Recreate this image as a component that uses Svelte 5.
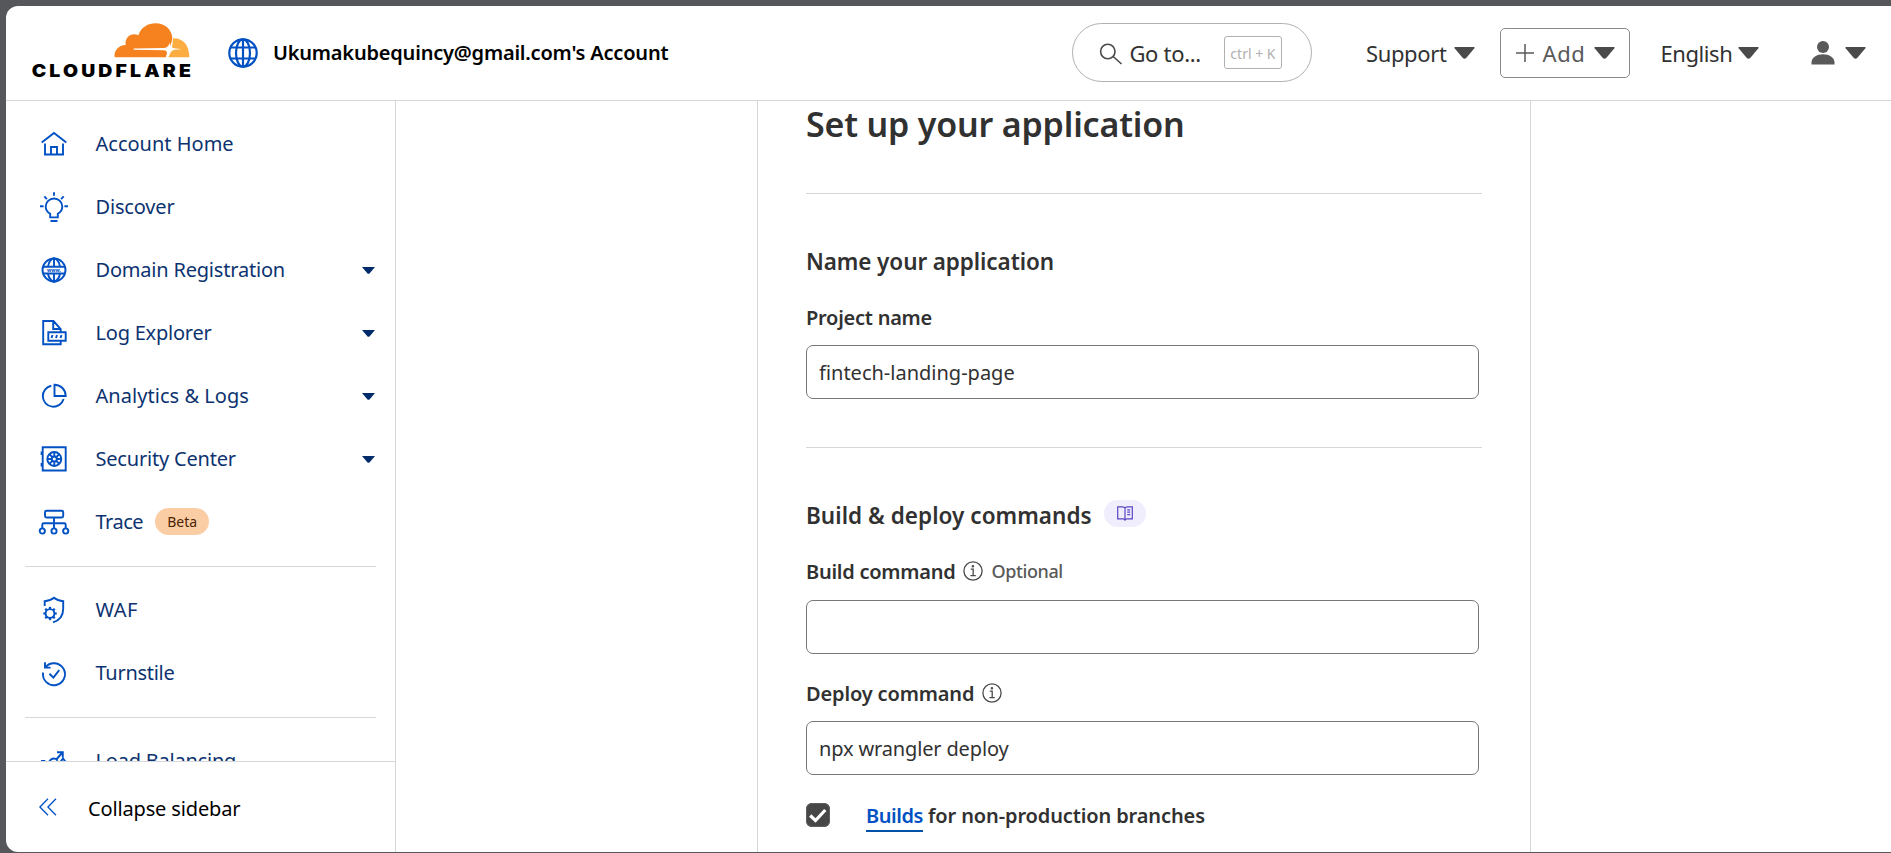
<script>
  const groups = [
    [
      { id: 'home', label: 'Account Home', ls: 0 },
      { id: 'bulb', label: 'Discover' },
      { id: 'www', label: 'Domain Registration', more: true, ls: -0.2 },
      { id: 'log', label: 'Log Explorer', more: true, ls: -0.22 },
      { id: 'pie', label: 'Analytics & Logs', more: true, ls: 0.04 },
      { id: 'safe', label: 'Security Center', more: true, ls: -0.2 },
      { id: 'trace', label: 'Trace', badge: 'Beta', ls: -0.5 }
    ],
    [
      { id: 'waf', label: 'WAF', ls: 0.5 },
      { id: 'turn', label: 'Turnstile', ls: -0.28 }
    ],
    [{ id: 'load', label: 'Load Balancing', ls: -0.22 }]
  ];
  const teeth = [0, 45, 90, 135, 180, 225, 270, 315];
</script>

{#snippet caret()}
  <svg class="caret" width="21" height="12" viewBox="0 0 21 12"><path d="M1.2 0h18.6q1.6 0 .6 1.3l-8.2 9.6q-1.7 1.6-3.4 0L.6 1.3Q-.4 0 1.2 0z" fill="#4a4a4a" /></svg>
{/snippet}

{#snippet info()}
  <svg class="info" width="20" height="20" viewBox="0 0 20 20" fill="none" stroke="#4a4a4a" stroke-width="1.3">
    <circle cx="10" cy="10" r="9.1" /><path d="M7.8 8.2h2.4v6.4M7.4 14.7h5.4" /><circle cx="9.9" cy="5.2" r=".6" fill="#4a4a4a" />
  </svg>
{/snippet}

{#snippet icon(id)}
  <svg class="icon" width="32" height="32" viewBox="0 0 32 32">
    {#if id === 'home'}
      <path d="M3.7 14.6 16 5l12.3 9.6M7 15.5v11h18v-11M13 26.5V19h6v7.5" />
    {:else if id === 'bulb'}
      <path d="M16 1.2v3.6M2 15.3h3.6M26.4 15.3H30M6.3 5.3l2.6 2.9M25.7 5.3l-2.6 2.9M12.5 30h7M12.2 26.4v-3.6c-2.8-1.7-4.5-4-4.5-7a8.3 8.3 0 0 1 16.6 0c0 3-1.7 5.3-4.5 7v3.6z" />
    {:else if id === 'www'}
      <path d="M5 12.7h22M5 19.5h22M16 4v8.7M16 19.5V28M10 12.7C10.5 9 12.5 5.5 16 4c3.5 1.5 5.5 5 6 8.7M10 19.5c.5 3.7 2.5 7 6 8.5 3.5-1.5 5.5-4.8 6-8.5" />
      <circle cx="16" cy="16" r="11.5" />
      <text x="16" y="17.6" text-anchor="middle">www.</text>
    {:else if id === 'log'}
      <path d="M22.7 15v-3L15.5 4H5.2v23.3h17.5v-3.6M15.2 4.2V12h7.5M10.3 15.2h17.4v8.5H10.3zM13.5 21l1-3M18 21l1-3M22.5 21l1-3" />
    {:else if id === 'pie'}
      <path d="M13.3 5.7a10.6 10.6 0 1 0 12.3 13.3M16.5 4.7V16h11.2A11.2 11.2 0 0 0 16.5 4.7z" />
    {:else if id === 'safe'}
      <path d="M4.7 4.3h23v23.2h-23zM3.6 8.5v3.5M3.6 20v3.5" />
      <circle cx="16.3" cy="16" r="7" /><circle cx="16.3" cy="16" r="2.5" />
      {#each teeth as a}<path d="M16.3 13.5V9" transform="rotate({a} 16.3 16)" />{/each}
    {:else if id === 'trace'}
      <rect x="7" y="4.7" width="18.2" height="6.8" rx="1.5" />
      <path d="M16 11.5V22M4.3 22v-3.3q0-1.5 1.5-1.5h20.4q1.5 0 1.5 1.5V22" />
      <circle cx="4.3" cy="25" r="2.6" /><circle cx="16" cy="25" r="2.6" /><circle cx="27.7" cy="25" r="2.6" />
    {:else if id === 'waf'}
      <path d="M6.7 12V7.2C10 7 13.3 6 16 3.8 18.6 6 21.7 7 25.2 7.2v7.5c0 6.5-3.5 11.6-10.2 13.6" />
      <circle cx="12" cy="19.5" r="4.4" />
      {#each teeth as a}<path d="M12 15.1v-2.3" stroke-width="2.2" transform="rotate({a} 12 19.5)" />{/each}
    {:else if id === 'turn'}
      <path d="M7.4 10.3a11 11 0 1 1-2.3 5.2M7 5.3v5.3h5.6M11.4 16.8l4 3.9 5.8-7.5" />
    {:else if id === 'load'}
      <path d="M19 7.2h5.8v5.3M24.5 7.5 18.7 14M11.3 18a4.5 4.5 0 0 1 8.3-2.3M4 18v-2h2.5l1.5 2 3-1.5M22 17.5l3-4 3.5 4.5z" />
    {/if}
  </svg>
{/snippet}

<div class="frame">
  <div class="window">
    <header>
      <svg class="logo" width="159" height="58" viewBox="35 37 477 174">
        <path fill="#f6821f" d="M283 143C280 122 295 107 316 106 312 82 335 66 354 77 363 52 383 41 406 41c27 0 46 17 50 41 0 10-3 20-9 31l-5 7-4 23z" />
        <path fill="#fbad41" d="M458 86c29-1 49 19 49 57h-64l5-15 8-20z" />
        <path fill="#fff" d="M340 116.5l92-1.5c9-1 12-5 16-15 3 10 6 14 14 16l22 2.5-22 2c-8 2-11 6-14 15l-6 11h-6l3-11c2-7 1-13-8-14l-91-1.5z" />
        <text x="0" y="0" transform="translate(34 201) scale(1.1 1)" textLength="434" lengthAdjust="spacing">CLOUDFLARE</text>
      </svg>
      <svg class="globe" width="30" height="30" viewBox="0 0 30 30" fill="none" stroke="#0051c3" stroke-width="2.2">
        <circle cx="15" cy="15" r="13.7" /><ellipse cx="15" cy="15" rx="7" ry="13.7" />
        <path d="M15 1v28M3 9.5h24M3 20.5h24" />
      </svg>
      <span class="account">Ukumakubequincy@gmail.com's Account</span>
      <div class="search">
        <svg width="24" height="22" viewBox="0 0 24 22" fill="none" stroke="#4a4a4a" stroke-width="1.6"><circle cx="8.8" cy="8.5" r="7.2" /><path d="M14.2 13.5 22.5 21" /></svg>
        <span class="goto">Go to...</span>
        <kbd>ctrl + K</kbd>
      </div>
      <div class="menu support"><span>Support</span>{@render caret()}</div>
      <div class="add">
        <svg width="18" height="18" viewBox="0 0 18 18" stroke="#595959" stroke-width="1.5"><path d="M9 0v18M0 9h18" /></svg>
        <span>Add</span>{@render caret()}
      </div>
      <div class="menu english"><span>English</span>{@render caret()}</div>
      <div class="menu user">
        <svg width="24" height="24" viewBox="0 0 24 24" fill="#595959"><circle cx="12" cy="6" r="6" /><path d="M.5 23.5v-2C.5 16.5 6 13.3 12 13.3s11.5 3.2 11.5 8.2v2z" /></svg>
        {@render caret()}
      </div>
    </header>

    <div class="body">
      <aside>
        <nav>
          {#each groups as group}
            <ul>
              {#each group as item}
                <li>
                  {@render icon(item.id)}
                  <span style="letter-spacing:{item.ls ?? -0.16}px">{item.label}</span>
                  {#if item.badge}<em>{item.badge}</em>{/if}
                  {#if item.more}<svg class="more" width="13" height="7" viewBox="0 0 13 7"><path d="M0 0h13L7.5 6.4q-1 .9-2 0z" fill="#002b6b" /></svg>{/if}
                </li>
              {/each}
            </ul>
          {/each}
        </nav>
        <div class="collapse">
          <svg width="18" height="18" viewBox="0 0 18 18" fill="none" stroke="#0051c3" stroke-width="1.3"><path d="M9 .7.9 9 9 17.3M17 .7 8.9 9l8.1 8.3" /></svg>
          <span>Collapse sidebar</span>
        </div>
      </aside>

      <main>
        <section class="panel">
          <h1>Set up your application</h1>
          <hr />
          <h2>Name your application</h2>
          <div class="label"><span>Project name</span></div>
          <div class="input">fintech-landing-page</div>
          <hr />
          <div class="heading">
            <h2 class="build">Build &amp; deploy commands</h2>
            <i class="docs">
              <svg width="16" height="15" viewBox="0 0 16 15" fill="none" stroke="#5b45c4" stroke-width="1.2"><path d="M8 2C7.5 1 6.5.8 5.5.8H.7v12H6c1 0 1.7.3 2 1.2.3-.9 1-1.2 2-1.2h5.3V.8h-4.8C9.5.8 8.5 1 8 2zM8 2v12M10.2 3.8h3M10.2 6.2h3M10.2 8.6h3" /></svg>
            </i>
          </div>
          <div class="label"><span>Build command</span>{@render info()}<small>Optional</small></div>
          <div class="input empty"></div>
          <div class="label deploy"><span class="dep">Deploy command</span>{@render info()}</div>
          <div class="input npx">npx wrangler deploy</div>
          <div class="check">
            <b class="box"><svg width="24" height="24" viewBox="0 0 24 24" fill="none" stroke="#fff" stroke-width="3.2"><path d="M4.2 12.5 9.5 17.5 19.3 7" /></svg></b>
            <div class="text"><a href="#builds">Builds</a> <span>for non-production branches</span></div>
          </div>
        </section>
      </main>
    </div>
  </div>
</div>

<style>
  :global(body) { background: #56575b; }
  * { box-sizing: border-box; }
  .frame {
    height: 853px;
    padding: 6px 0 1px 6px;
    overflow: hidden;
    background: #56575b;
    font-family: "Noto Sans", sans-serif;
    font-size: 20px;
    line-height: 28px;
    color: #313131;
  }
  .window {
    height: 846px;
    display: flex;
    flex-direction: column;
    overflow: hidden;
    background: #fff;
    border-radius: 12px 0 0 12px;
  }
  span, small, em, kbd { white-space: nowrap; }
  svg { display: block; flex: none; }

  header {
    flex: none;
    height: 95px;
    display: flex;
    align-items: center;
    padding: 0 25px 0 26px;
    border-bottom: 1px solid #d5d7d8;
  }
  .logo { margin: -5px 0 0; overflow: visible; }
  .logo text { font: 900 53px Inter, sans-serif; fill: #000; }
  .globe { margin-left: 37px; }
  .account { width: 396px; margin-left: 15px; font-weight: 600; color: #000; letter-spacing: -0.2px; }
  .search {
    width: 240px;
    height: 59px;
    margin: -1px 0 0 404px;
    padding: 0 29px 0 26px;
    display: flex;
    align-items: center;
    border: 1px solid #b0b0b0;
    border-radius: 30px;
  }
  .search svg { margin-top: 3px; }
  .goto { width: 72px; margin: 1px 0 0 6px; font-size: 22px; letter-spacing: -0.3px; }
  kbd {
    width: 58px;
    height: 33px;
    margin-left: auto;
    border: 1px solid #b0b0b0;
    border-radius: 3px;
    font: 14px/33px "Noto Sans", sans-serif;
    text-align: center;
    color: #b0b0b0;
  }
  .menu, .add { display: flex; align-items: center; justify-content: space-between; font-size: 22px; }
  .support { width: 109px; margin-left: 54px; letter-spacing: -0.35px; }
  .add {
    width: 131px;
    height: 50px;
    margin-left: 25px;
    padding: 0 14px 0 15px;
    border: 1px solid #8a8a8a;
    border-radius: 5px;
    color: #595959;
  }
  .add span { letter-spacing: 0.6px; }
  .english { width: 99px; margin-left: 30px; letter-spacing: -0.4px; }
  .user { width: 55px; margin-left: 52px; }

  .body { flex: 1; min-height: 0; display: flex; }
  aside { flex: none; width: 390px; display: flex; flex-direction: column; border-right: 1px solid #d5d7d8; }
  nav { flex: 1; min-height: 0; overflow: hidden; padding: 11.5px 19px 0; }
  ul { list-style: none; margin: 0; padding: 0; }
  ul + ul { margin-top: 12px; padding-top: 12px; border-top: 1px solid #d5d7d8; }
  li { height: 63px; display: flex; align-items: center; padding: 0 1px 0 13px; color: #0c3370; }
  li span { margin-left: 25.5px; }
  .icon { fill: none; stroke: #0051c3; stroke-width: 1.9; }
  .icon text { font: 700 5px "Noto Sans", sans-serif; fill: #0051c3; stroke: none; }
  .more { margin-left: auto; }
  em {
    width: 54px;
    height: 27px;
    margin: -1px 0 0 12px;
    border-radius: 14px;
    background: #fbcda5;
    font: 14px/27px "Noto Sans", sans-serif;
    text-align: center;
    color: #4a2504;
  }
  .collapse {
    flex: none;
    height: 91px;
    display: flex;
    align-items: center;
    padding: 0 0 0 33px;
    border-top: 1px solid #d5d7d8;
    color: #000;
  }
  .collapse span { margin: 3px 0 0 31px; letter-spacing: -0.15px; }

  main { flex: 1; min-width: 0; }
  .panel {
    width: 774px;
    height: 100%;
    margin-left: 361px;
    padding: 0 48px;
    border: solid #d5d7d8;
    border-width: 0 1px;
  }
  h1 { margin: 0; font-size: 34px; line-height: 46px; font-weight: 600; letter-spacing: -0.18px; }
  hr { height: 1px; margin: 46px 0 52px; border: 0; background: #d5d7d8; }
  h2 { margin: 0; font-size: 22.5px; line-height: 31px; height: 30px; font-weight: 600; white-space: nowrap; letter-spacing: -0.1px; }
  .build { width: 287px; letter-spacing: 0.04px; }
  .label { display: flex; align-items: center; height: 28px; margin-top: 28px; font-weight: 600; letter-spacing: -0.25px; }
  .info { margin-left: 7px; margin-bottom: 2px; }
  .label small { margin: -2px 0 0 9px; font-size: 18px; font-weight: 500; color: #595959; letter-spacing: -0.4px; }
  .dep { width: 169px; letter-spacing: -0.15px; }
  .input {
    width: 673px;
    height: 54px;
    margin-top: 13px;
    padding: 0 12px;
    border: 1px solid #75777b;
    border-radius: 7px;
    line-height: 53px;
  }
  .input + hr { margin-top: 48px; }
  .empty { margin-top: 14px; }
  .deploy { margin-top: 26px; }
  .npx { letter-spacing: -0.15px; }
  .heading { display: flex; align-items: center; }
  .docs {
    width: 42px;
    height: 27px;
    margin: -3px 0 0 11px;
    display: grid;
    place-items: center;
    border-radius: 14px;
    background: #f0edfd;
  }
  .check { display: flex; align-items: center; margin-top: 27px; }
  .box { width: 24px; height: 24px; margin-top: -2px; border-radius: 6px; background: #474747; box-shadow: inset 0 0 0 1px #5f5f5f; }
  .text { margin-left: 36px; font-weight: 600; white-space: nowrap; letter-spacing: -0.12px; }
  a { display: inline-block; height: 30px; margin-bottom: -3px; border-bottom: 2px solid #0051a8; color: #0051c3; text-decoration: none; letter-spacing: -0.45px; }
</style>
